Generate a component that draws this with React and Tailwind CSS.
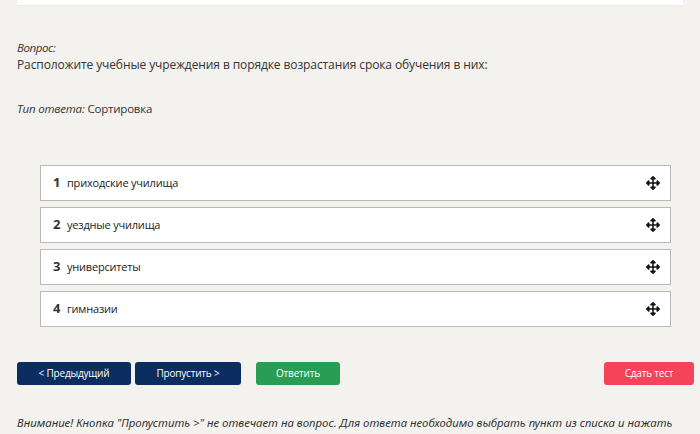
import { FaArrowsAlt } from "react-icons/fa";

const items = [
  "приходские училища",
  "уездные училища",
  "университеты",
  "гимназии",
];

export default function App() {
  return (
    <div
      className="min-h-screen bg-[#f3f2ef] text-[#333] pl-[17px] pr-[6px] overflow-hidden h-[434px]"
      style={{ fontFamily: '"Open Sans", "Liberation Sans", sans-serif' }}
    >
      <div className="bg-white h-[5px] w-[666px] shadow-[0_1px_1px_rgba(0,0,0,0.03)]" />

      <div className="pt-[35px]">
        <div className="italic text-[11.5px] leading-[16px] tracking-[-0.4px]">Вопрос:</div>
        <div className="text-[12px] leading-[18px] tracking-[-0.1px]">
          Расположите учебные учреждения в порядке возрастания срока обучения в них:
        </div>
      </div>

      <div className="mt-[27px] text-[11.5px] leading-[16px] tracking-[-0.2px]">
        <span className="italic">Тип ответа:</span> Сортировка
      </div>

      <div className="mx-[23px] mt-[48px] flex flex-col gap-[6px]">
        {items.map((t, i) => (
          <Row key={i} n={i + 1} text={t} />
        ))}
      </div>

      <div className="mt-[35px] flex items-center text-[10px] text-white tracking-[-0.2px]">
        <button className="w-[114px] h-[23px] rounded-[3px] bg-[#0b2d60]">&lt; Предыдущий</button>
        <button className="ml-[4px] w-[106px] h-[23px] rounded-[3px] bg-[#0b2d60]">Пропустить &gt;</button>
        <button className="ml-[15px] w-[84px] h-[23px] rounded-[3px] bg-[#2a9d55]">Ответить</button>
        <button className="ml-auto w-[90px] h-[23px] rounded-[3px] bg-[#f5435a]">Сдать тест</button>
      </div>

      <div
        className="mt-[29px] italic text-[11.4px] leading-[17px] text-[#333] pr-[20px]"
        style={{ fontFamily: '"Noto Sans", "DejaVu Sans", sans-serif' }}
      >
        Внимание! Кнопка "Пропустить &gt;" не отвечает на вопрос. Для ответа необходимо выбрать пункт из списка и нажать
        кнопку "Ответить".
      </div>
    </div>
  );
}

function Row({ n, text }) {
  return (
    <div className="h-[36px] bg-white border border-[#b8b8b8] flex items-center pl-[12px] pr-[10px]">
      <span className="font-bold text-[13px] w-[14px]">{n}</span>
      <span className="text-[11px] text-[#222] tracking-[-0.2px]">{text}</span>
      <FaArrowsAlt className="ml-auto w-[14px] h-[14px] text-[#111]" />
    </div>
  );
}
